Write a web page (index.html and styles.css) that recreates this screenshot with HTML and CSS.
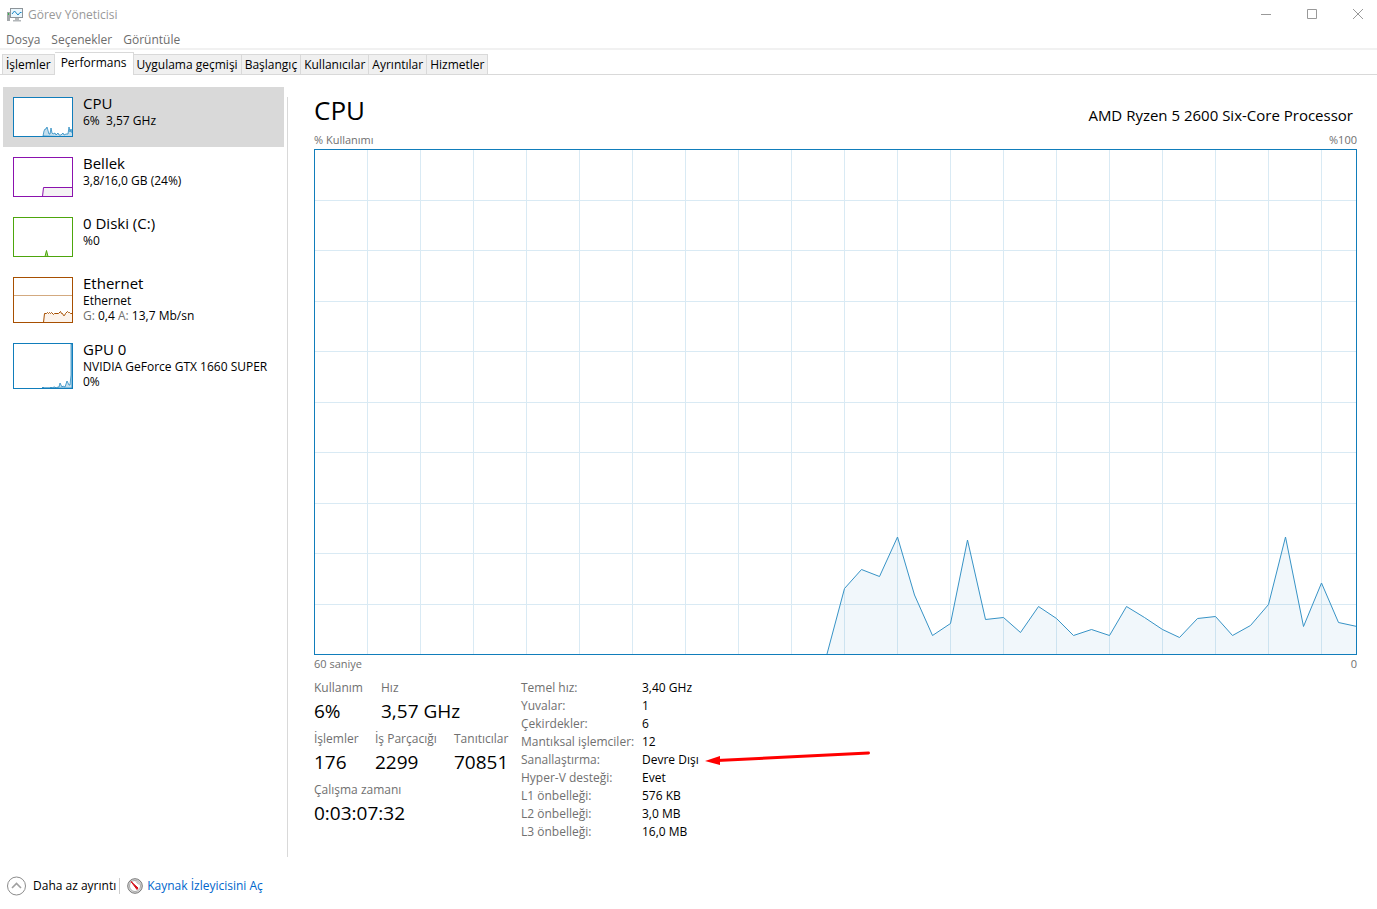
FILE: index.html
```html
<!DOCTYPE html>
<html lang="tr">
<head>
<meta charset="utf-8">
<title>Görev Yöneticisi</title>
<link rel="stylesheet" href="styles.css">
</head>
<body>
<div class="window">
  <header class="titlebar">
    <svg class="app-icon" width="16" height="14" viewBox="0 0 16 14" aria-hidden="true">
      <rect x="0" y="4" width="3" height="9" fill="#a3a7aa"/>
      <rect x="1" y="5" width="1" height="2" fill="#36b24a"/>
      <rect x="3.500" y="0.500" width="12" height="9" fill="#e9f6fd" stroke="#8d9499"/>
      <path d="M5 6l2.500-3L11 7l2-2.500h1.500" fill="none" stroke="#1b86c4"/>
      <path d="M8 10h4v2h2v1.500H6V12h2z" fill="#b3b7ba"/>
    </svg>
    <span class="title">Görev Yöneticisi</span>
    <div class="controls">
      <button class="control" type="button" aria-label="Simge durumuna küçült"><svg width="12" height="12" viewBox="0 0 12 12"><path d="M1 5.500h10"/></svg></button>
      <button class="control" type="button" aria-label="Ekranı kapla"><svg width="12" height="12" viewBox="0 0 12 12"><path d="M1.500 0.500h9v9h-9z"/></svg></button>
      <button class="control" type="button" aria-label="Kapat"><svg width="12" height="12" viewBox="0 0 12 12"><path d="M1 0l10 10M11 0L1 10"/></svg></button>
    </div>
  </header>
  <nav class="menu">
    <button type="button">Dosya</button>
    <button type="button">Seçenekler</button>
    <button type="button">Görüntüle</button>
  </nav>
  <div class="tabs" role="tablist">
    <button class="tab" role="tab" type="button">İşlemler</button>
    <button class="tab tab-active" role="tab" type="button" aria-selected="true">Performans</button>
    <button class="tab" role="tab" type="button">Uygulama geçmişi</button>
    <button class="tab" role="tab" type="button">Başlangıç</button>
    <button class="tab" role="tab" type="button">Kullanıcılar</button>
    <button class="tab" role="tab" type="button">Ayrıntılar</button>
    <button class="tab" role="tab" type="button">Hizmetler</button>
  </div>

  <main class="content">
    <aside class="sidebar">
      <button class="resource resource-active" type="button">
        <svg class="spark cpu" width="60" height="40" viewBox="0 0 60 40"><path d="M30 39l1-5 1-2h1l1-2 2 7h1l1-6 1 5 1 1 2-1 1 2 2-2 1 2h2l2-2 1 2 2-1 2 0 1-7 1 5 1-3 1 4 1 1v3z"/><rect x="0.500" y="0.500" width="59" height="39"/></svg>
        <span class="resource-text"><span class="name">CPU</span><span>6%&nbsp; 3,57 GHz</span></span>
      </button>
      <button class="resource" type="button">
        <svg class="spark memory" width="60" height="40" viewBox="0 0 60 40"><path d="M29.500 39.500l1-9H60v9z"/><rect x="0.500" y="0.500" width="59" height="39"/></svg>
        <span class="resource-text"><span class="name">Bellek</span><span>3,8/16,0 GB (24%)</span></span>
      </button>
      <button class="resource" type="button">
        <svg class="spark disk" width="60" height="40" viewBox="0 0 60 40"><path d="M32 39.500l1.500-6 1.500 6z"/><rect x="0.500" y="0.500" width="59" height="39"/></svg>
        <span class="resource-text"><span class="name">0 Diski (C:)</span><span>%0</span></span>
      </button>
      <button class="resource" type="button">
        <svg class="spark network" width="60" height="46" viewBox="0 0 60 46"><path class="level" d="M1 18.500h58"/><path d="M30.500 45.500l1-9 2 0 1-1 1 1 1-1 1 1 1-1 2 2 1-1h4l2-2 1 2 1 0 1 2 1 0 1-2 2-2 1 1 1 0 1 1 2 0v9z"/><rect x="0.500" y="0.500" width="59" height="45"/></svg>
        <span class="resource-text"><span class="name">Ethernet</span><span>Ethernet</span><span><span class="muted">G:</span> 0,4 <span class="muted">A:</span> 13,7 Mb/sn</span></span>
      </button>
      <button class="resource" type="button">
        <svg class="spark gpu" width="60" height="46" viewBox="0 0 60 46"><path d="M29 45l1-1 1 1h6l1-1 1 1 2-1 1 0 1 1 2-1 1 0 1-4 2 4 1-1 2 1 2-6 2 4 1 0 1-10V1h1v44z"/><rect x="0.500" y="0.500" width="59" height="45"/></svg>
        <span class="resource-text"><span class="name">GPU 0</span><span>NVIDIA GeForce GTX 1660 SUPER</span><span>0%</span></span>
      </button>
    </aside>
    <div class="divider"></div>

    <section class="panel">
      <div class="heading">
        <h1>CPU</h1>
        <span class="model">AMD Ryzen 5 2600 Six-Core Processor</span>
      </div>
      <div class="axis"><span>% Kullanımı</span><span>%100</span></div>
      <div class="chart">
        <svg viewBox="0 0 1041 504" preserveAspectRatio="none" role="img" aria-label="CPU kullanımı">
          <path class="grid" d="M52.500 0V504M105.500 0V504M158.500 0V504M211.500 0V504M264.500 0V504M317.500 0V504M370.500 0V504M423.500 0V504M476.500 0V504M529.500 0V504M582.500 0V504M635.500 0V504M688.500 0V504M741.500 0V504M794.500 0V504M847.500 0V504M900.500 0V504M953.500 0V504M1006.500 0V504M0 50.500H1041M0 100.500H1041M0 151.500H1041M0 201.500H1041M0 252.500H1041M0 302.500H1041M0 353.500H1041M0 403.500H1041M0 454.500H1041"/>
          <path class="area" d="M512 504L529.500 438.500 546.500 419.500 564.500 426.500 582.500 387 599.500 445 617.500 485.500 635.500 473.500 652.500 390 670.500 469.500 688.500 467.500 705.500 482.500 723.500 456.500 741.500 468.500 758.500 485.500 776.500 479.500 794.500 485.500 811.500 456.500 829.500 467.500 847.500 479.500 864.500 487.500 882.500 468.500 900.500 466.500 917.500 485.500 935.500 475.500 953.500 454.500 970.500 387 988.500 476.500 1006.500 433 1023.500 472.500 1042 476.500V506H512z"/>
        </svg>
      </div>
      <div class="axis axis-bottom"><span>60 saniye</span><span>0</span></div>

      <div class="figures">
        <div class="stats">
          <dl class="stat-row speeds">
            <div><dt>Kullanım</dt><dd>6%</dd></div>
            <div><dt>Hız</dt><dd>3,57 GHz</dd></div>
          </dl>
          <dl class="stat-row counts">
            <div><dt>İşlemler</dt><dd>176</dd></div>
            <div><dt>İş Parçacığı</dt><dd>2299</dd></div>
            <div><dt>Tanıtıcılar</dt><dd>70851</dd></div>
          </dl>
          <dl class="stat-row">
            <div><dt>Çalışma zamanı</dt><dd>0:03:07:32</dd></div>
          </dl>
        </div>
        <table class="details">
          <tr><th scope="row">Temel hız:</th><td>3,40 GHz</td></tr>
          <tr><th scope="row">Yuvalar:</th><td>1</td></tr>
          <tr><th scope="row">Çekirdekler:</th><td>6</td></tr>
          <tr><th scope="row">Mantıksal işlemciler:</th><td>12</td></tr>
          <tr><th scope="row">Sanallaştırma:</th><td class="marked">Devre Dışı
            <svg class="arrow" width="166" height="16" viewBox="0 0 166 16" aria-hidden="true"><path d="M12 9.500L163.500 2" stroke="#f00" stroke-width="3" stroke-linecap="round"/><path d="M0 10l15-5v9z" fill="#f00"/></svg></td></tr>
          <tr><th scope="row">Hyper-V desteği:</th><td>Evet</td></tr>
          <tr><th scope="row">L1 önbelleği:</th><td>576 KB</td></tr>
          <tr><th scope="row">L2 önbelleği:</th><td>3,0 MB</td></tr>
          <tr><th scope="row">L3 önbelleği:</th><td>16,0 MB</td></tr>
        </table>
      </div>
    </section>
  </main>

  <footer class="footer">
    <button class="less" type="button">
      <svg width="20" height="20" viewBox="0 0 20 20" fill="none" aria-hidden="true"><circle cx="9.500" cy="10" r="9" stroke="#8c8c8c"/><path d="M5 12l4.500-4.500L14 12" stroke="#a0a0a0" stroke-width="1.600"/></svg>
      <span>Daha az ayrıntı</span>
    </button>
    <a class="monitor" href="#">
      <svg width="16" height="16" viewBox="0 0 16 16" aria-hidden="true"><circle cx="8" cy="8" r="7.300" fill="#d9d9d9" stroke="#777"/><circle cx="8" cy="8" r="5.500" fill="#fff" stroke="#aaa"/><path d="M4 3.500l6 8 1-1.500z" fill="#d3101a" stroke="#d3101a"/><path d="M9 3.500l3 3" stroke="#999"/></svg>
      <span>Kaynak İzleyicisini Aç</span>
    </a>
  </footer>
</div>
</body>
</html>
```
FILE: styles.css
```css
* { box-sizing: border-box; }
body {
  margin: 0;
  background: #fff;
  color: #000;
  font: 12px/16px "Open Sans", "Noto Sans", sans-serif;
}
button {
  margin: 0;
  padding: 0;
  border: 0;
  background: none;
  color: inherit;
  font: inherit;
  text-align: left;
  white-space: nowrap;
}
svg { display: block; flex: none; }
h1, dl, dd { margin: 0; }

.window { display: flex; flex-direction: column; min-height: 100vh; }

.titlebar { display: flex; align-items: center; height: 29px; padding-left: 7px; gap: 5px; color: #999; }
.controls { display: flex; margin-left: auto; }
.control { display: grid; place-items: center; width: 46px; height: 29px; }
.control:last-child { width: 38px; margin-left: 4px; }
.control svg { fill: none; stroke: #999; }

.menu { display: flex; gap: 11px; height: 21px; padding: 3px 6px 0; border-bottom: 2px solid #f1f1f1; color: #6d6d6d; }

.tabs { display: flex; align-items: flex-end; height: 25px; padding-left: 2px; border-bottom: 1px solid #d9d9d9; }
.tab { height: 20px; padding: 0 3px; border: 1px solid #d9d9d9; border-width: 1px 1px 0 0; background: #f0f0f0; }
.tab:first-child { border-left-width: 1px; }
.tab-active { height: 23px; margin-bottom: -1px; padding: 0 6px 2px; background: #fff; }

.content { display: flex; flex: 1; }
.sidebar { width: 287px; flex: none; padding: 12px 3px 0; }
.divider { width: 1px; flex: none; margin-top: 22px; background: #d9d9d9; }
.resource { display: flex; align-items: flex-start; gap: 10px; width: 281px; padding: 10px; }
.resource-active { background: #d9d9d9; }
.resource-text { display: flex; flex-direction: column; height: 40px; line-height: 15px; white-space: nowrap; }
.name { margin-top: -4px; font-size: 15px; line-height: 20px; }
.muted { color: #707070; }

.spark { background: #fff; fill: #fff; stroke: currentColor; }
.spark rect { fill: none; }
.cpu, .gpu { color: #117dbb; }
.cpu path, .gpu path { fill: #c5dfee; stroke-opacity: 0.7; }
.memory { color: #8b12ae; }
.memory path { fill: #f4f2f4; }
.disk { color: #4da60c; }
.disk path { fill: #b5dc91; }
.network { color: #a74f01; }
.network path { fill: #fcf3eb; }
.network .level { stroke: #d3aa80; }

.panel { display: flex; flex: 1; flex-direction: column; min-width: 0; padding: 18px 20px 0 26px; }
.heading { display: flex; align-items: flex-start; justify-content: space-between; height: 38px; padding-right: 4px; }
h1 { font-size: 26px; line-height: 34px; font-weight: 400; }
.model { padding-top: 12px; font-size: 15px; line-height: 20px; }
.axis { display: flex; justify-content: space-between; height: 18px; color: #707070; font-size: 11px; line-height: 18px; }
.chart { flex: 1; display: flex; min-height: 300px; border: 1px solid #117dbb; }
.chart svg { width: 100%; height: 0; min-height: 100%; }
.grid { fill: none; stroke: #d9eaf4; }
.area { fill: rgba(17, 125, 187, 0.06); stroke: #3793c6; }

.figures { display: flex; gap: 12px; padding: 7px 0 16px; }
.stats { width: 195px; }
.stat-row { display: grid; height: 51px; white-space: nowrap; }
.speeds { grid-template-columns: 67px auto; }
.counts { grid-template-columns: 61px 79px auto; }
dt, .details th { color: #707070; font-weight: 400; text-align: left; }
dd { font-size: 19px; line-height: 30px; }
.details { border-collapse: collapse; align-self: flex-start; margin-top: -1px; line-height: 18px; white-space: nowrap; }
.details th, .details td { padding: 0; }
.details th { width: 121px; }
.marked { position: relative; }
.arrow { position: absolute; left: 63px; top: 0; }

.footer { display: flex; align-items: center; height: 46px; margin-top: 6px; padding-left: 7px; }
.less, .monitor { display: flex; align-items: center; }
.less { gap: 6px; padding-right: 3px; }
.monitor { gap: 4px; padding-left: 7px; border-left: 1px solid #ccc; color: #0066cc; text-decoration: none; }
```
